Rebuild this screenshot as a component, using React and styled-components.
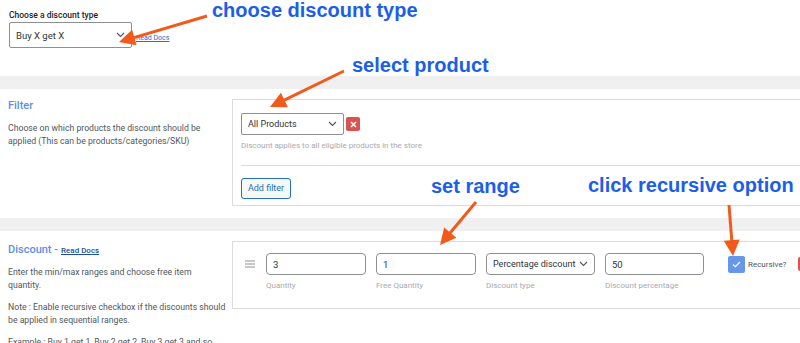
import React from "react";
import styled, { createGlobalStyle } from "styled-components";

const GlobalStyle = createGlobalStyle`
  html, body {
    margin: 0;
    padding: 0;
    overflow: hidden;
    background: #fff;
  }
  body {
    font-family: Roboto, "Liberation Sans", Arial, sans-serif;
    color: #3c434a;
  }
`;

const ORANGE = "#f25a1c";

const Page = styled.div`
  position: relative;
  width: 800px;
  height: 343px;
  overflow: hidden;
`;

const TopSection = styled.div`
  height: 76px;
  box-sizing: border-box;
  padding: 9px 9px 0;
`;

const FieldLabel = styled.div`
  font-size: 8.5px;
  font-weight: 500;
  line-height: 12px;
  color: #1d2327;
  margin-bottom: 1px;
`;

const InlineRow = styled.div`
  display: flex;
  align-items: flex-end;
`;

const SelectBox = styled.div`
  display: flex;
  align-items: center;
  justify-content: space-between;
  flex-shrink: 0;
  box-sizing: border-box;
  width: ${(p) => p.$width}px;
  height: ${(p) => p.$height}px;
  padding: 0 6px;
  border: 1px solid #8c8f94;
  border-radius: ${(p) => (p.$radius ? p.$radius : 2)}px;
  font-size: ${(p) => p.$size}px;
  color: #2c3338;
  background: #fff;
  white-space: nowrap;
`;

const DocsLink = styled.a`
  font-size: ${(p) => (p.$dark ? 8 : 7)}px;
  line-height: 9px;
  color: ${(p) => (p.$dark ? "#1d4f95" : "#2a6fc9")};
  font-weight: ${(p) => (p.$dark ? 500 : 400)};
  text-decoration: underline;
  margin-left: ${(p) => (p.$dark ? 3 : 4)}px;
  margin-bottom: ${(p) => (p.$dark ? 0 : 5)}px;
  cursor: pointer;
`;

const Band = styled.div`
  height: 13px;
  background: #f0f0f1;
`;

const Section = styled.div`
  display: grid;
  grid-template-columns: 232px 1fr;
  height: ${(p) => (p.$height ? `${p.$height}px` : "auto")};
  box-sizing: border-box;
`;

const SideInfo = styled.div`
  padding: ${(p) => p.$top}px 0 0 8px;
`;

const Heading = styled.div`
  display: flex;
  align-items: baseline;
  font-size: 11px;
  font-weight: 500;
  line-height: 14px;
  color: #5d8fe4;
  margin-bottom: 9px;
`;

const Desc = styled.p`
  margin: 0 0 9px;
  font-size: 8.7px;
  line-height: 13px;
  color: #50575e;
  white-space: nowrap;
`;

const CardArea = styled.div`
  padding-top: 10px;
  min-width: 0;
`;

const Card = styled.div`
  border: 1px solid #dcdcde;
  border-right: 0;
  padding: ${(p) => p.$pad};
  overflow: hidden;
`;

const Row = styled.div`
  display: flex;
  align-items: ${(p) => p.$align || "center"};
`;

const RemoveButton = styled.span`
  display: inline-flex;
  align-items: center;
  justify-content: center;
  width: ${(p) => p.$size}px;
  height: ${(p) => p.$size}px;
  margin-left: ${(p) => p.$gap}px;
  border-radius: 2px;
  background: #d9534f;
  flex-shrink: 0;
`;

const Hint = styled.div`
  margin-top: 6px;
  font-size: 8px;
  line-height: 10px;
  color: #a7aaad;
`;

const Divider = styled.div`
  border-top: 1px solid #dcdcde;
  margin: 14px 0 10px;
`;

const AddButton = styled.button`
  box-sizing: border-box;
  width: 50px;
  height: 21px;
  padding: 0;
  border: 1px solid #2271b1;
  border-radius: 3px;
  background: #f6f7f7;
  color: #2271b1;
  font-family: Roboto, "Liberation Sans", Arial, sans-serif;
  font-size: 9px;
`;

const Handle = styled.div`
  display: flex;
  align-items: center;
  height: 22px;
  margin-right: 11px;
  flex-shrink: 0;
`;

const Field = styled.div`
  display: flex;
  flex-direction: column;
  flex-shrink: 0;
  margin-right: 10px;
`;

const TextInput = styled.input`
  box-sizing: border-box;
  width: ${(p) => p.$width}px;
  height: 22px;
  padding: 0 6px;
  border: 1px solid #8c8f94;
  border-radius: 4px;
  font-family: Roboto, "Liberation Sans", Arial, sans-serif;
  font-size: 9.5px;
  color: #2c3338;
  outline: none;
`;

const SubLabel = styled.div`
  margin-top: 6px;
  font-size: 8px;
  line-height: 10px;
  color: #a7aaad;
  white-space: nowrap;
`;

const CheckGroup = styled.div`
  display: flex;
  align-items: center;
  flex-shrink: 0;
  height: 22px;
  margin-left: 14px;
`;

const CheckBox = styled.span`
  display: inline-flex;
  align-items: center;
  justify-content: center;
  width: 17px;
  height: 17px;
  border-radius: 2px;
  background: #6598ea;
`;

const CheckText = styled.span`
  margin-left: 3px;
  font-size: 8px;
  color: #50575e;
  white-space: nowrap;
`;

const Overlay = styled.svg`
  position: absolute;
  left: 0;
  top: 0;
  pointer-events: none;
`;

const Note = styled.div`
  position: absolute;
  left: ${(p) => p.$x}px;
  top: ${(p) => p.$y}px;
  font-family: "Liberation Sans", Arial, sans-serif;
  font-weight: 700;
  font-size: 20px;
  line-height: 20px;
  color: #1c5ee9;
  white-space: nowrap;
`;

const Chevron = () => (
  <svg width="9" height="6" viewBox="0 0 9 6">
    <path d="M1 1l3.5 3.5L8 1" fill="none" stroke="#50575e" strokeWidth="1.1" />
  </svg>
);

const Cross = () => (
  <svg width="7" height="7" viewBox="0 0 7 7">
    <path d="M1 1l5 5M6 1L1 6" stroke="#fff" strokeWidth="1.6" />
  </svg>
);

const Arrow = ({ x1, y1, x2, y2 }) => {
  const dx = x2 - x1;
  const dy = y2 - y1;
  const len = Math.hypot(dx, dy);
  const ux = dx / len;
  const uy = dy / len;
  const head = 16;
  const half = 8;
  const bx = x2 - ux * head;
  const by = y2 - uy * head;
  const px = -uy * half;
  const py = ux * half;
  return (
    <g>
      <line
        x1={x1}
        y1={y1}
        x2={bx + ux * 3}
        y2={by + uy * 3}
        stroke={ORANGE}
        strokeWidth="3"
      />
      <polygon
        points={`${x2},${y2} ${bx + px},${by + py} ${bx - px},${by - py}`}
        fill={ORANGE}
      />
    </g>
  );
};

const fields = [
  { value: "3", label: "Quantity", width: 100 },
  { value: "1", label: "Free Quantity", width: 100 },
  { select: "Percentage discount", label: "Discount type", width: 109 },
  { value: "50", label: "Discount percentage", width: 99 },
];

const App = () => {
  return (
    <>
      <GlobalStyle />
      <Page>
        <TopSection>
          <FieldLabel>Choose a discount type</FieldLabel>
          <InlineRow>
            <SelectBox $width={123} $height={26} $size={9.5}>
              Buy X get X <Chevron />
            </SelectBox>
            <DocsLink>Read Docs</DocsLink>
          </InlineRow>
        </TopSection>

        <Band />

        <Section $height={129}>
          <SideInfo $top={10}>
            <Heading>Filter</Heading>
            <Desc>
              Choose on which products the discount should be
              <br />
              applied (This can be products/categories/SKU)
            </Desc>
          </SideInfo>
          <CardArea>
            <Card $pad="13px 0 6px 8px">
              <Row>
                <SelectBox $width={103} $height={22} $size={9}>
                  All Products <Chevron />
                </SelectBox>
                <RemoveButton $size={14} $gap={2}>
                  <Cross />
                </RemoveButton>
              </Row>
              <Hint>Discount applies to all eligible products in the store</Hint>
              <Divider />
              <AddButton>Add filter</AddButton>
            </Card>
          </CardArea>
        </Section>

        <Band />

        <Section>
          <SideInfo $top={12}>
            <Heading>
              Discount -
              <DocsLink $dark>Read Docs</DocsLink>
            </Heading>
            <Desc>
              Enter the min/max ranges and choose free item
              <br />
              quantity.
            </Desc>
            <Desc>
              Note : Enable recursive checkbox if the discounts should
              <br />
              be applied in sequential ranges.
            </Desc>
            <Desc>
              Example : Buy 1 get 1, Buy 2 get 2, Buy 3 get 3 and so
              <br />
              on.
            </Desc>
          </SideInfo>
          <CardArea>
            <Card $pad="11px 0 17px 12px">
              <Row $align="flex-start">
                <Handle>
                  <svg width="10" height="8" viewBox="0 0 10 8">
                    <path d="M0 1h10M0 4h10M0 7h10" stroke="#8c8f94" strokeWidth="1.2" />
                  </svg>
                </Handle>
                {fields.map((f) => (
                  <Field key={f.label}>
                    {f.select ? (
                      <SelectBox $width={f.width} $height={22} $size={9} $radius={4}>
                        {f.select} <Chevron />
                      </SelectBox>
                    ) : (
                      <TextInput $width={f.width} value={f.value} readOnly />
                    )}
                    <SubLabel>{f.label}</SubLabel>
                  </Field>
                ))}
                <CheckGroup>
                  <CheckBox>
                    <svg width="9" height="7" viewBox="0 0 9 7">
                      <path d="M1 3.5l2.3 2.2L8 1" fill="none" stroke="#fff" strokeWidth="1.2" />
                    </svg>
                  </CheckBox>
                  <CheckText>Recursive?</CheckText>
                  <RemoveButton $size={14} $gap={12}>
                    <Cross />
                  </RemoveButton>
                </CheckGroup>
              </Row>
            </Card>
          </CardArea>
        </Section>

        <Note $x={212} $y={0}>choose discount type</Note>
        <Note $x={352} $y={55}>select product</Note>
        <Note $x={431} $y={176}>set range</Note>
        <Note $x={588} $y={175}>click recursive option</Note>

        <Overlay width="800" height="343" viewBox="0 0 800 343">
          <Arrow x1={207} y1={16} x2={119} y2={42} />
          <Arrow x1={344} y1={71} x2={270} y2={107} />
          <Arrow x1={476} y1={202} x2={440} y2={245} />
          <Arrow x1={729} y1={205} x2={733} y2={256} />
        </Overlay>
      </Page>
    </>
  );
};

export default App;
